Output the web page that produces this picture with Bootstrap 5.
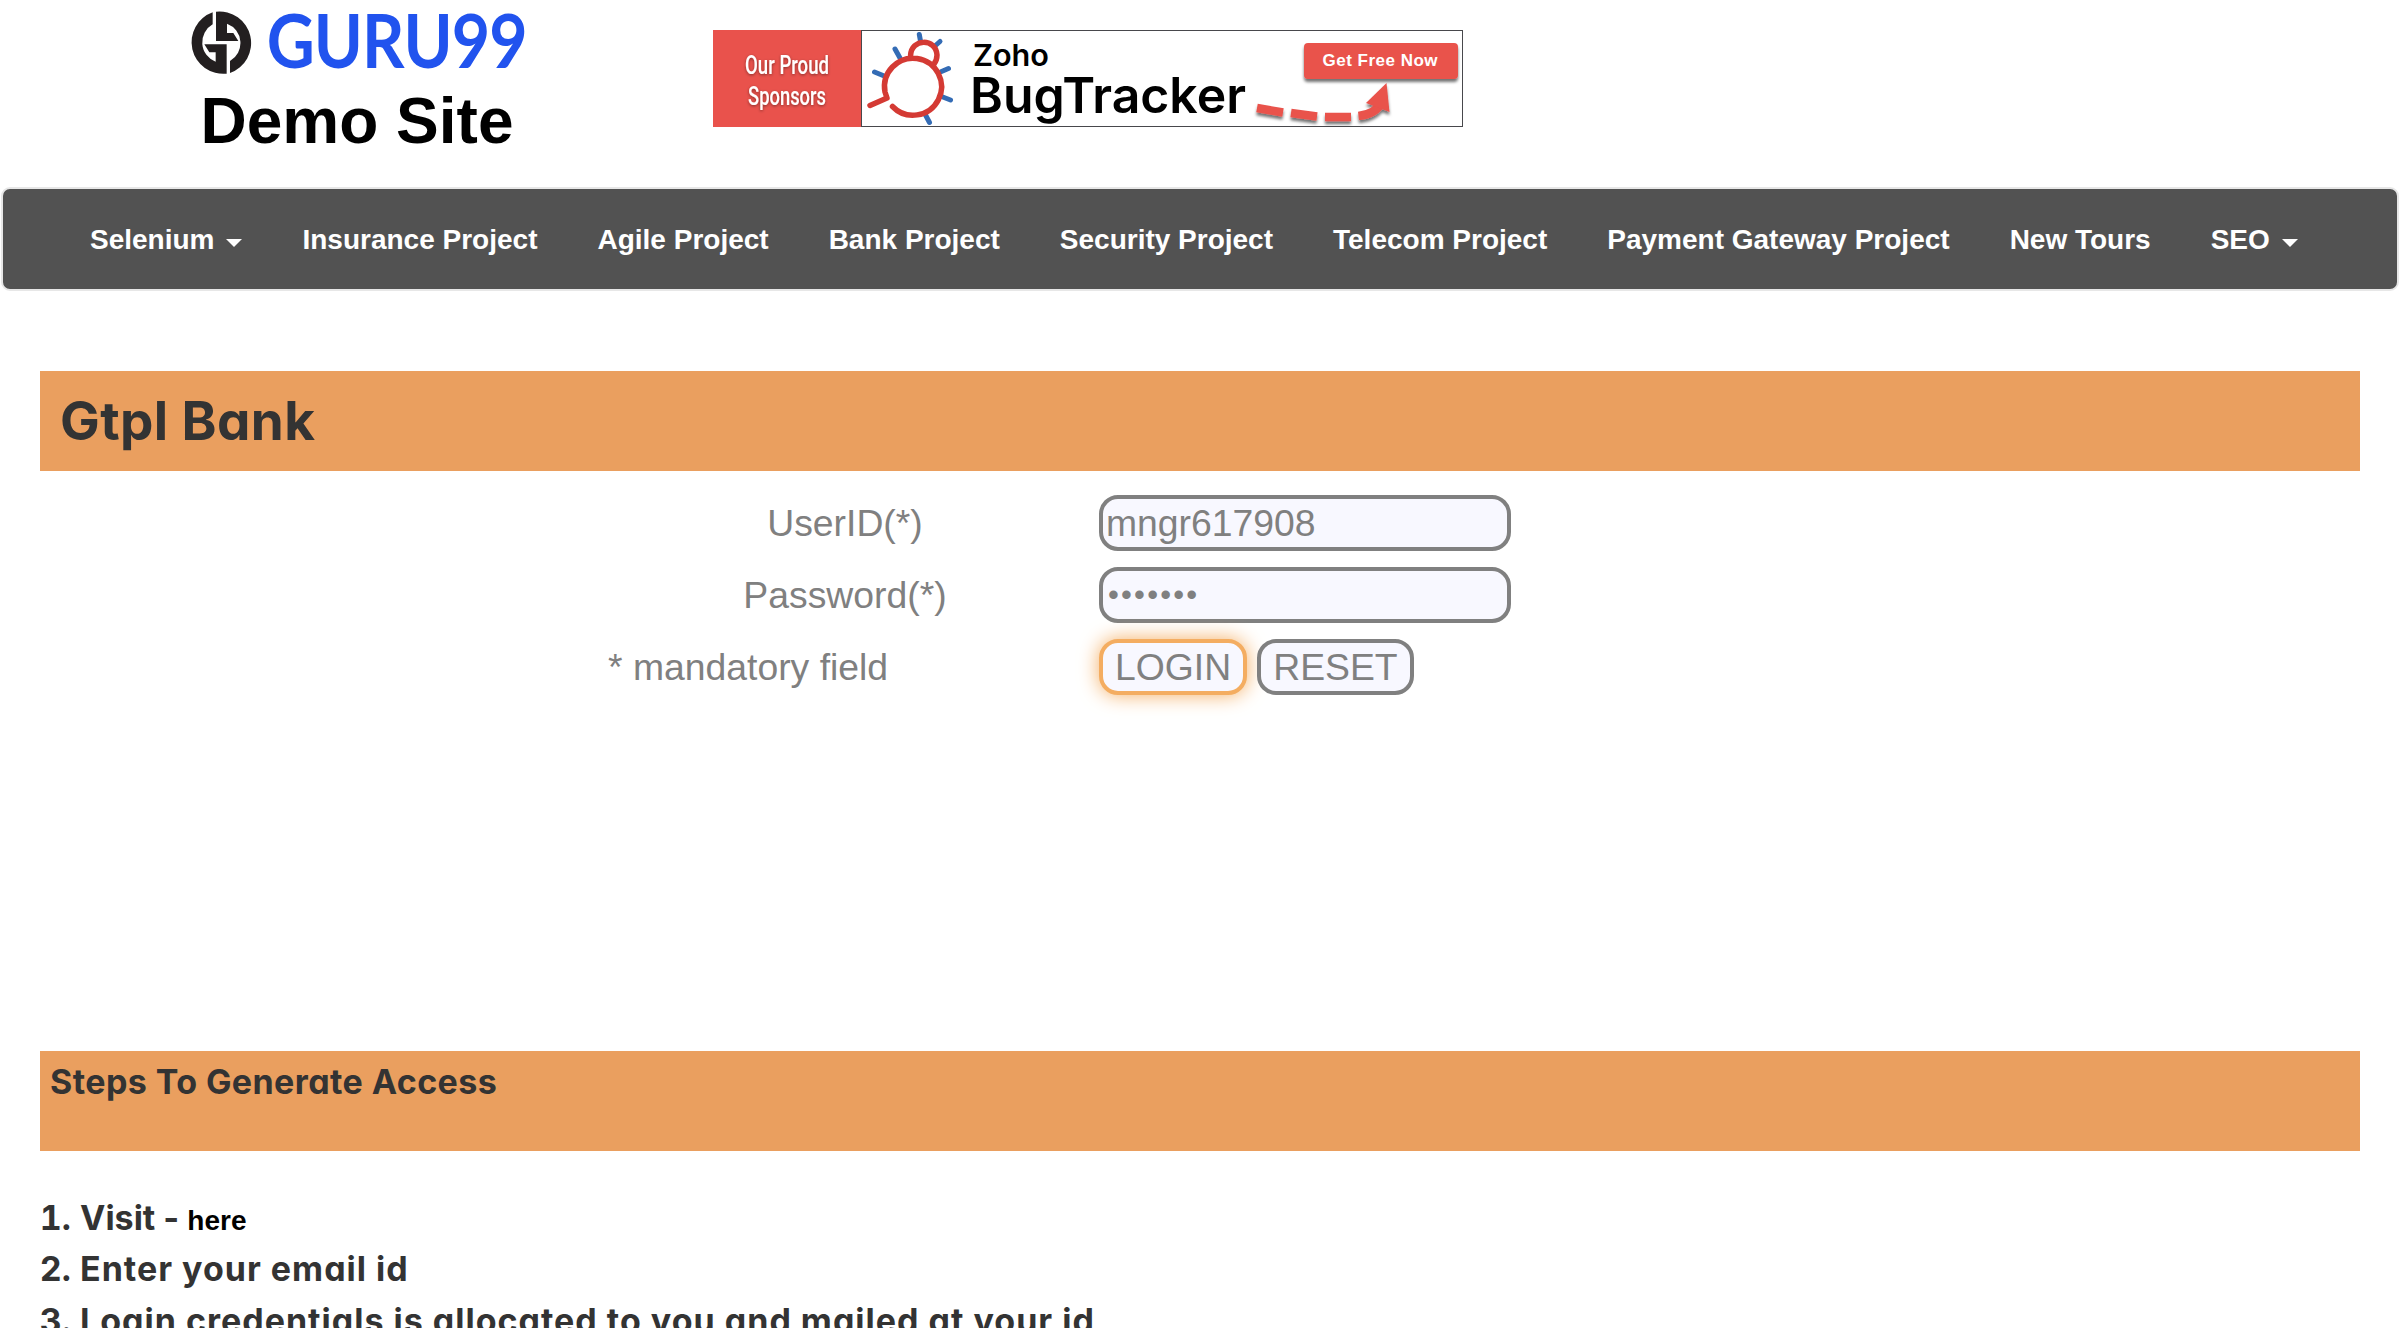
<!DOCTYPE html>
<html lang="en">
<head>
<meta charset="utf-8">
<title>Guru99 Bank Home Page</title>
<link href="https://cdn.jsdelivr.net/npm/bootstrap@5.3.0/dist/css/bootstrap.min.css" rel="stylesheet">
<style>
body{font-family:"Liberation Sans",Arial,sans-serif;background:#fff;height:1328px;overflow:hidden}
.site-head{height:187px}
.site-head svg{overflow:visible}
.brand-block{width:520px;padding-left:182px;margin-right:193px}
.brand-title{font-size:64px;line-height:64px;font-weight:700;color:#000;margin:14px 0 0 18.5px;white-space:nowrap}
.sponsor{margin-top:30px}
.main-nav{margin:0 1px;height:104px;background:#525252;border:2px solid #e7e7e7;border-radius:9px;padding:0 0 0 57px}
.main-nav .nav-link{color:#fff;font-weight:700;font-size:28px;line-height:40px;padding:30.5px 30px;white-space:nowrap}
.main-nav .dropdown-toggle::after{border-top:8px solid;border-left:8px solid transparent;border-right:8px solid transparent;margin-left:12px;vertical-align:2px}
.round-face{font-family:Inter,"Open Sans",sans-serif;font-feature-settings:"cv11";font-weight:700;color:#333}
.strip{background:#ea9f5f;height:100px;margin:0 40px}
.strip-first{margin-top:80px}
.strip-title{font-size:53px;line-height:100px;padding-left:20px;margin:0;letter-spacing:.4px}
.strip-sub{font-size:34px;line-height:61px;padding-left:10px;margin:0;letter-spacing:.42px}
.login-form{padding-top:24px;height:580px;color:gray;font-size:37.33px;line-height:56px}
.login-form .field-label{width:508px;margin-left:591px}
.login-form .field-label.note{padding-left:17px}
.field-row{height:56px;margin-bottom:16px}
.field-box,.act-btn{height:56px;border:4px solid gray;border-radius:19px;background:#f8f8ff;color:gray;font-size:37.33px;line-height:44px;outline:0}
.field-box{width:412px;padding:2px 2px 2px 3px}
.field-box[type=password]{font-size:31px;letter-spacing:2.2px;padding-left:5px}
.act-btn{padding:0 12px}
.act-btn+.act-btn{margin-left:10px}
.act-btn.glow{border-color:#f4ad61;box-shadow:0 0 20px #f4ad61}
.steps{margin:41px 0 0;padding-left:80px;font-size:34px;line-height:51.4px}
.steps .spaced{letter-spacing:1px}
.steps a{font:700 28px "Liberation Sans",Arial,sans-serif;color:#000;text-decoration:none}
</style>
</head>
<body>
<header class="site-head d-flex align-items-start">
  <div class="brand-block">
    <svg class="d-block" width="350" height="75" viewBox="36 0 1050 225">
      <g fill="#231f20">
        <path id="half" d="M128 37A95 95 0 0 0 170 221V133H103L118 157H137V185A62 62 0 0 1 128 73Z"/>
        <use href="#half" transform="rotate(180 154 128)"/>
      </g>
      <text x="290" y="204" textLength="780" lengthAdjust="spacingAndGlyphs" letter-spacing="-3" font-family="Lato" font-weight="700" font-size="222" fill="#2153ee">GURU99</text>
    </svg>
    <h1 class="brand-title">Demo Site</h1>
  </div>
  <svg class="sponsor" width="750" height="98" viewBox="713 30 750 98">
    <defs>
      <filter id="sh" x="-20%" y="-40%" width="140%" height="200%"><feDropShadow dx="0" dy="3" stdDeviation="1.5" flood-opacity=".55"/></filter>
      <filter id="soft" x="-20%" y="-40%" width="140%" height="200%"><feDropShadow dx="0" dy="1" stdDeviation="1.5" flood-opacity=".45"/></filter>
    </defs>
    <rect x="861.5" y="30.5" width="601" height="96" fill="#fff" stroke="#48484c"/>
    <rect x="713" y="30" width="148" height="97" fill="#e9524c"/>
    <g font-family="Roboto" font-weight="500" font-size="25" fill="#fff" filter="url(#soft)">
      <text x="745" y="73.7" textLength="84" lengthAdjust="spacingAndGlyphs">Our Proud</text>
      <text x="748" y="105" textLength="78" lengthAdjust="spacingAndGlyphs">Sponsors</text>
    </g>
    <g fill="none" stroke-width="5" stroke-linecap="round" stroke="#346cb5">
      <path d="M919.3 34.5L920.5 41M940 41.5L935.5 45.5M895 49L900 58M874.5 72L883 75.5M941.5 71.5L948.5 68.5M941.5 96.5L950.5 100M925 114L929.5 122.5"/>
    </g>
    <g fill="none" stroke-width="5.5" stroke-linecap="round" stroke-linejoin="round" stroke="#d43a34">
      <path d="M892.5 106.5A28.5 28.5 0 1 0 885 92L887 98L870 105.5M910.5 56C911 38 936 38 937 55Q937 60 934 64"/>
    </g>
    <g fill="#000" font-family="Inter">
      <text x="973" y="66" font-size="30" font-weight="600" textLength="76" lengthAdjust="spacingAndGlyphs">Zoho</text>
      <text x="970" y="113" font-size="49.5" font-weight="600" textLength="276" lengthAdjust="spacingAndGlyphs">BugTracker</text>
    </g>
    <g fill="#e9524c" filter="url(#sh)"><rect x="1304" y="43" width="154" height="36" rx="4"/></g>
    <text x="1322.5" y="65.7" font-family="Liberation Sans" font-weight="700" font-size="17" fill="#fff" textLength="115" lengthAdjust="spacing">Get Free Now</text>
    <g filter="url(#sh)"><path d="M1257 108L1283 112.5M1291 113L1317 116.5M1325 117H1351M1358.5 116Q1376 114 1382 102" fill="none" stroke="#e9524c" stroke-width="8.5"/>
    <path d="M1386.5 83L1389.5 112L1366 103Z" fill="#e9524c"/></g>
  </svg>
</header>
<nav class="main-nav navbar-expand">
  <ul class="nav flex-nowrap">
    <li class="nav-item"><a class="nav-link dropdown-toggle" href="#">Selenium</a></li>
    <li class="nav-item"><a class="nav-link" href="#">Insurance Project</a></li>
    <li class="nav-item"><a class="nav-link" href="#">Agile Project</a></li>
    <li class="nav-item"><a class="nav-link" href="#">Bank Project</a></li>
    <li class="nav-item"><a class="nav-link" href="#">Security Project</a></li>
    <li class="nav-item"><a class="nav-link" href="#">Telecom Project</a></li>
    <li class="nav-item"><a class="nav-link" href="#">Payment Gateway Project</a></li>
    <li class="nav-item"><a class="nav-link" href="#">New Tours</a></li>
    <li class="nav-item"><a class="nav-link dropdown-toggle" href="#">SEO</a></li>
  </ul>
</nav>
<main>
  <div class="strip strip-first"><h2 class="strip-title round-face">Gtpl Bank</h2></div>
  <form class="login-form">
    <div class="field-row d-flex"><label class="field-label text-center" for="uid">UserID(*)</label><input class="field-box" id="uid" value="mngr617908"></div>
    <div class="field-row d-flex"><label class="field-label text-center" for="pwd">Password(*)</label><input class="field-box" id="pwd" type="password" value="1234567"></div>
    <div class="field-row d-flex"><span class="field-label note">* mandatory field</span><button type="button" class="act-btn glow">LOGIN</button><button type="button" class="act-btn">RESET</button></div>
  </form>
  <div class="strip"><h3 class="strip-sub round-face">Steps To Generate Access</h3></div>
  <ol class="steps round-face">
    <li>Visit - <a href="#">here</a></li>
    <li><span class="spaced">Enter your email id</span></li>
    <li><span class="spaced">Login credentials is allocated to you and mailed at your id</span></li>
  </ol>
</main>
<script src="https://cdn.jsdelivr.net/npm/bootstrap@5.3.0/dist/js/bootstrap.bundle.min.js"></script>
</body>
</html>
